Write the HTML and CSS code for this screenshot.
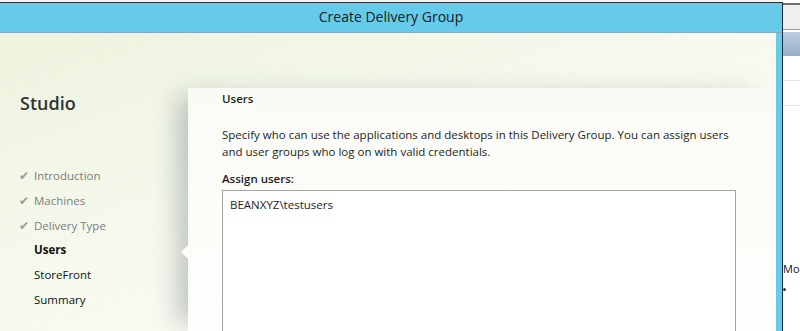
FILE: index.html
```html
<!DOCTYPE html>
<html lang="en">
<head>
  <meta charset="UTF-8">
  <title>Create Delivery Group</title>
  <link rel="stylesheet" href="styles.css">
</head>
<body>
<div class="desktop">
  <div class="window">
    <div class="titlebar">Create Delivery Group</div>
    <div class="frame">
      <div class="content">
        <div class="sidebar">
          <h2 class="studio">Studio</h2>
          <ul class="steps">
            <li class="done"><span class="tick">&#10004;</span>Introduction</li>
            <li class="done"><span class="tick">&#10004;</span>Machines</li>
            <li class="done"><span class="tick">&#10004;</span>Delivery Type</li>
            <li class="current">Users</li>
            <li>StoreFront</li>
            <li>Summary</li>
          </ul>
        </div>
        <div class="panel">
          <h3 class="panel_title">Users</h3>
          <p class="desc">Specify who can use the applications and desktops in this Delivery Group. You can assign users and user groups who log on with valid credentials.</p>
          <div class="label">Assign users:</div>
          <div class="userbox">BEANXYZ\testusers</div>
        </div>
      </div>
    </div>
  </div>
  <div class="behind">
    <div class="behind_top"></div>
    <div class="behind_head"></div>
    <div class="behind_row"></div>
    <div class="behind_row"></div>
    <div class="behind_text">Mo</div>
    <div class="behind_dot"></div>
  </div>
</div>
</body>
</html>
```
FILE: styles.css
```css
html, body {
  margin: 0;
  height: 100%;
  overflow: hidden;
}
body {
  background: #f4f4f4;
  font-family: "Open Sans", "Liberation Sans", sans-serif;
  color: #1e1e1e;
}
.desktop {
  display: flex;
  height: 331px;
  overflow: hidden;
}
.window {
  width: 782px;
  margin-top: 2px;
  border-top: 1px solid #1c3340;
  border-right: 1px solid #1c2c38;
  background: #66cbea;
  display: flex;
  flex-direction: column;
}
.titlebar {
  height: 29px;
  line-height: 28px;
  text-align: center;
  font-size: 14px;
  color: #1a1a1a;
  border-bottom: 1px solid #8aa9b4;
}
.frame {
  flex: 1;
  padding-right: 6px;
  display: flex;
  min-height: 0;
}
.content {
  flex: 1;
  display: flex;
  background: linear-gradient(160deg, #edf3de 0%, #f4f8ea 35%, #fafbf4 70%, #fdfdfb 100%);
}
.sidebar {
  width: 188px;
  flex: none;
  padding-left: 20px;
  box-sizing: border-box;
}
.studio {
  margin: 58px 0 0 0;
  font-size: 18px;
  font-weight: 600;
  color: #333;
}
.steps {
  list-style: none;
  margin: 48px 0 0 0;
  padding: 0;
  font-size: 11.5px;
}
.steps li {
  height: 24.8px;
  line-height: 25px;
  padding-left: 14px;
  position: relative;
  color: #111;
}
.steps li.done {
  color: #7d7d7d;
}
.steps li.current {
  font-weight: 700;
}
.tick {
  position: absolute;
  left: -1px;
  top: 0;
  font-size: 12px;
  color: #9a9a9a;
}
.panel {
  flex: 1;
  margin-top: 55px;
  padding-left: 34px;
  position: relative;
  display: flex;
  flex-direction: column;
  background: linear-gradient(180deg, #fafbf5 0%, #fcfdf9 60%, #fefefe 100%);
  box-shadow: -18px 0 24px -8px rgba(70, 80, 100, 0.32);
}
.panel::after {
  content: "";
  position: absolute;
  left: -7px;
  top: 157px;
  border-top: 7px solid transparent;
  border-bottom: 7px solid transparent;
  border-right: 7px solid #fefefe;
}
.panel_title {
  margin: 3px 0 0 0;
  font-size: 11.5px;
  font-weight: 600;
  color: #222;
}
.desc {
  margin: 20px 0 0 0;
  width: 520px;
  font-size: 11.5px;
  line-height: 17px;
  color: #1e1e1e;
}
.label {
  margin-top: 11px;
  font-size: 11.5px;
  font-weight: 600;
  color: #222;
}
.userbox {
  flex: 1;
  margin-top: 4px;
  width: 505px;
  border: 1px solid #a3a3a3;
  border-bottom: 0;
  background: #fff;
  padding: 6px 0 0 7px;
  font-size: 11.5px;
  color: #1e1e1e;
}
.behind {
  flex: 1;
  min-width: 0;
  overflow: hidden;
  background: #fff;
  display: flex;
  flex-direction: column;
}
.behind_top {
  height: 24px;
  margin-top: 3px;
  border-top: 2px solid #6e6e6e;
  border-bottom: 1px solid #9a9a9a;
  background: #efefef;
}
.behind_head {
  height: 24px;
  margin-top: 2px;
  background: linear-gradient(180deg, #bccde2 0%, #97adc6 100%);
}
.behind_row {
  height: 24px;
  border-bottom: 1px solid #e4e4e4;
}
.behind_text {
  margin-top: 155px;
  font-size: 11px;
  color: #111;
  white-space: nowrap;
}
.behind_dot {
  width: 3px;
  height: 3px;
  margin-top: 12px;
  border-radius: 50%;
  background: #333;
}
```
